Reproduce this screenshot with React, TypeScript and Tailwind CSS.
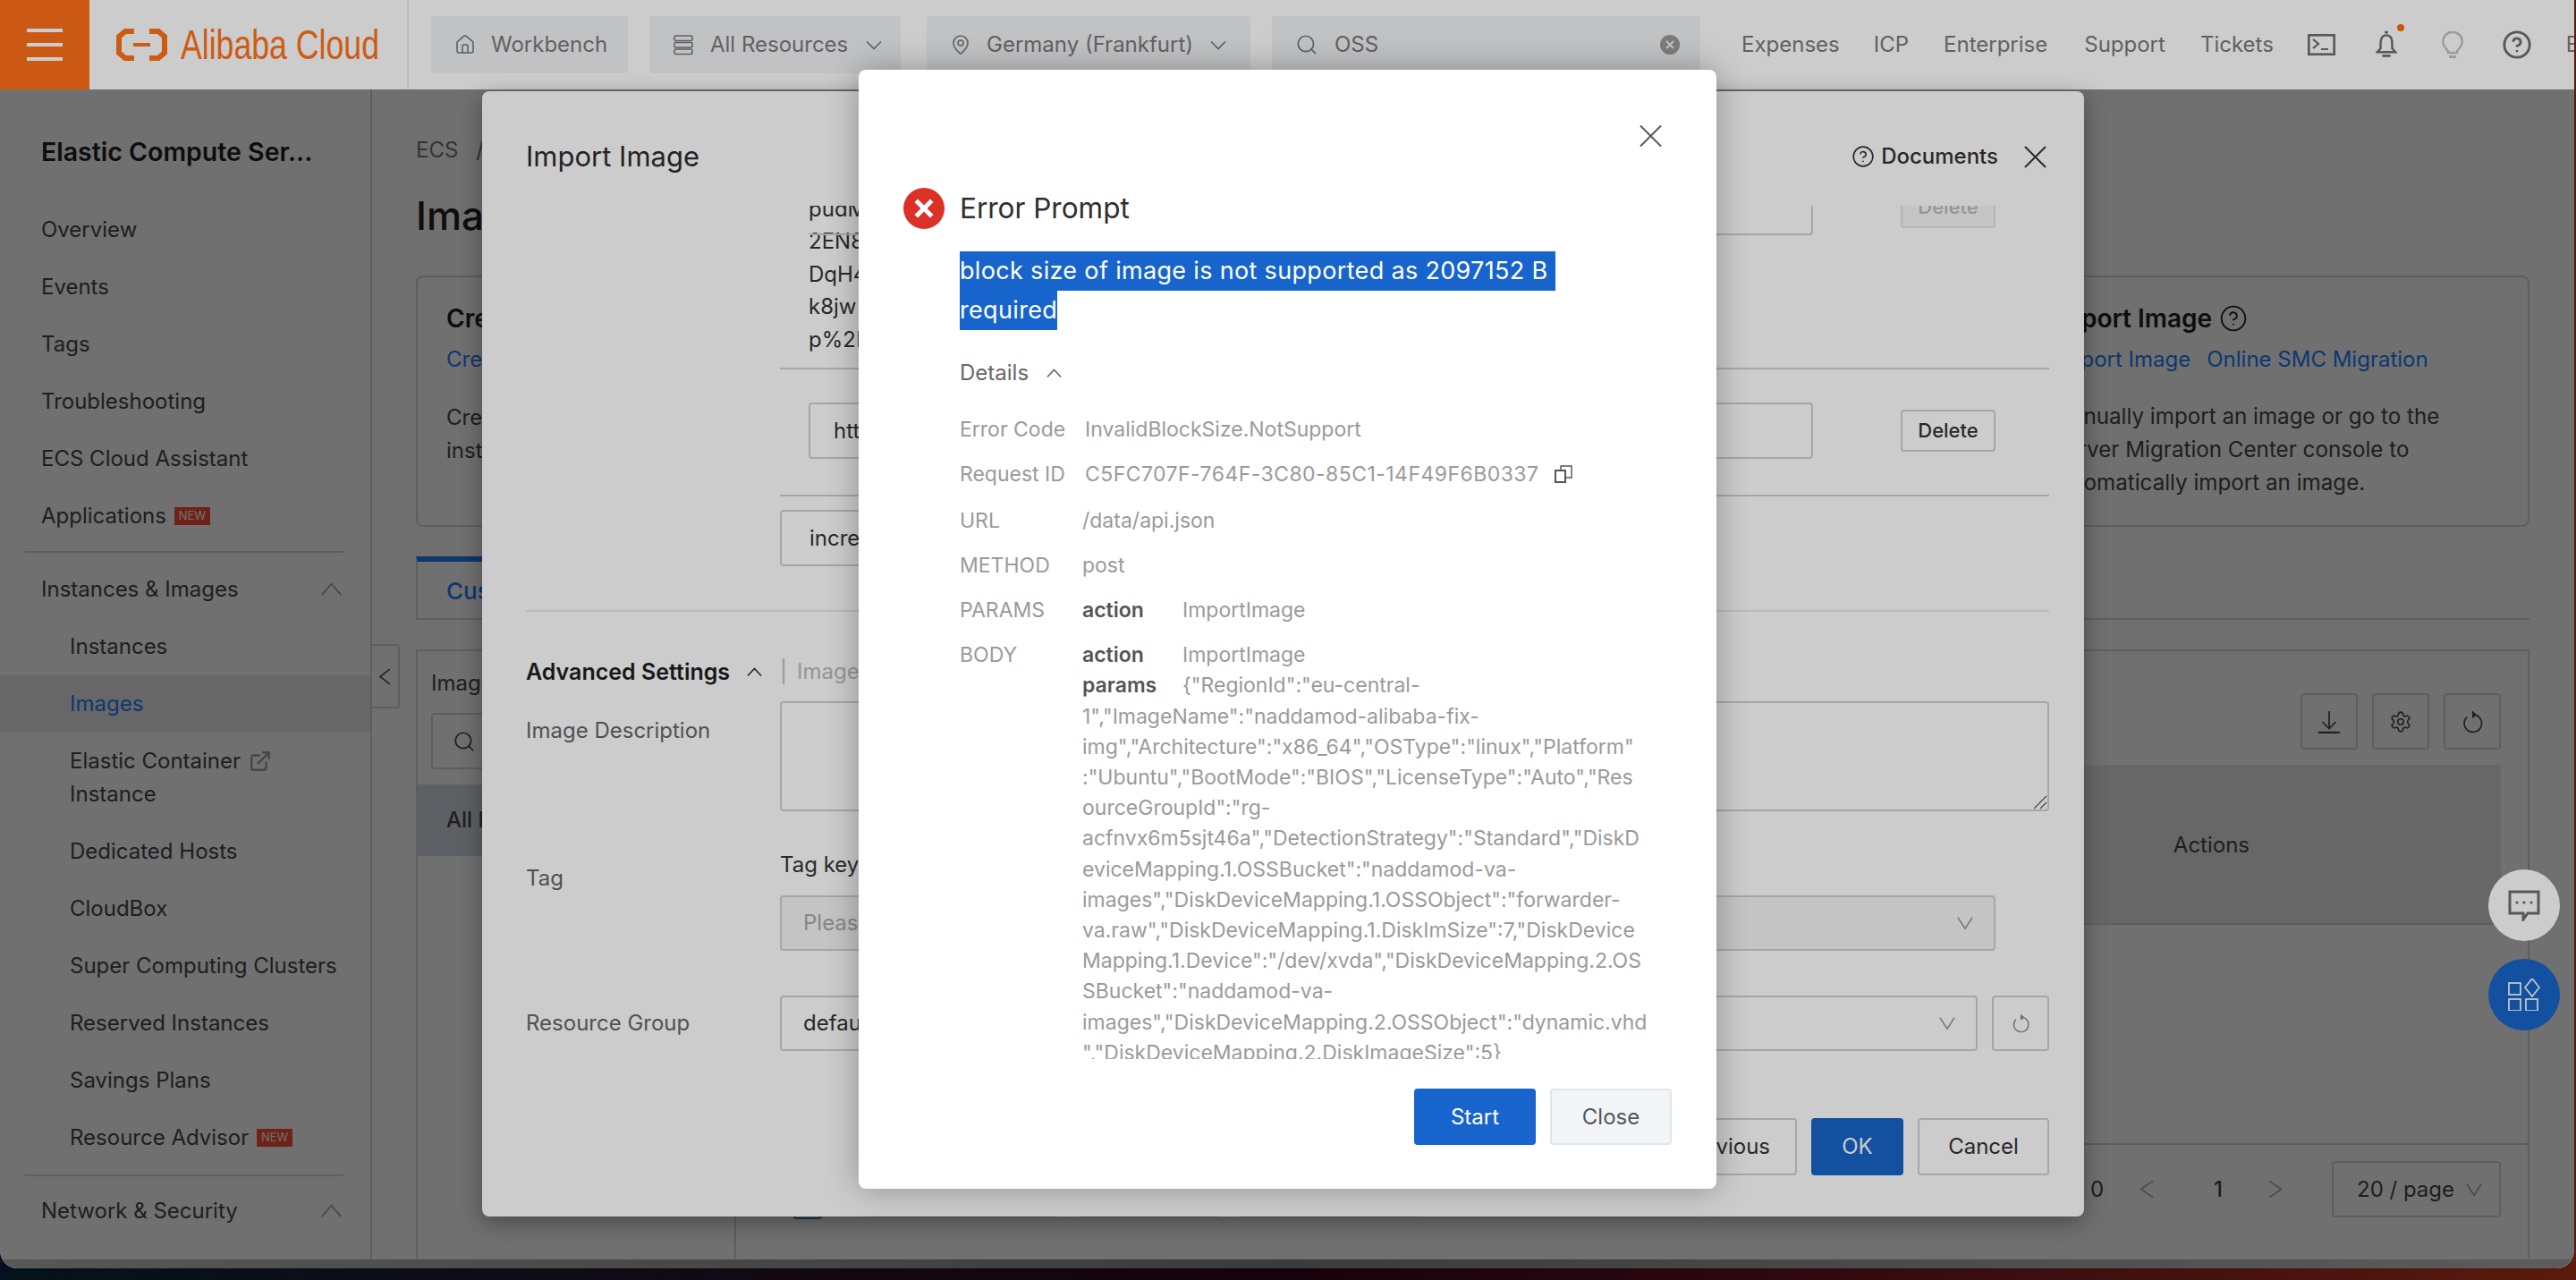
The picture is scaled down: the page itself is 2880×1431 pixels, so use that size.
import React from 'react';
import { House, MapPin, Search, CircleHelp, Settings, ExternalLink } from 'lucide-react';

const Chevron = ({ dir = 'down', className = '' }: { dir?: 'down' | 'up' | 'left' | 'right'; className?: string }) => {
  const d = {
    down: 'M2 3 L10 13 L18 3',
    up: 'M2 13 L10 3 L18 13',
    left: 'M14 1 L5 8 L14 15',
    right: 'M6 1 L15 8 L6 15',
  }[dir];
  return (
    <svg viewBox="0 0 20 16" preserveAspectRatio="none" fill="none" stroke="currentColor" strokeWidth="1.6" className={className}>
      <path d={d} vectorEffect="non-scaling-stroke" />
    </svg>
  );
};

const Cross = ({ className = '' }: { className?: string }) => (
  <svg viewBox="0 0 26 26" fill="none" stroke="currentColor" strokeWidth="2" className={className}>
    <path d="M1 1 L25 25 M25 1 L1 25" />
  </svg>
);

const Refresh = ({ className = '' }: { className?: string }) => (
  <svg viewBox="0 0 24 24" fill="none" stroke="currentColor" strokeWidth="1.5" className={className}>
    <path d="M13 4.5 A9 9 0 1 1 6.5 7" />
    <path d="M12 0.5 L16.5 4.5 L12 8.5 Z" fill="currentColor" stroke="none" />
  </svg>
);

const Logo = () => (
  <svg viewBox="0 0 57 36" className="w-[57px] h-[36px] shrink-0" fill="none" stroke="#ff7417" strokeWidth="6">
    <path d="M20 3 H10 L3 9 V27 L10 33 H20" />
    <path d="M37 3 H47 L54 9 V27 L47 33 H37" />
    <path d="M19 18 H38" strokeWidth="4" />
  </svg>
);

const TopItem = ({ children, className = '' }: { children: React.ReactNode; className?: string }) => (
  <div className={`h-[64px] bg-[#f2f3f5] rounded-[4px] flex items-center shrink-0 text-[24px] text-[#7a7a7a] ${className}`}>{children}</div>
);

const Topbar = () => (
  <div className="h-[100px] bg-white flex items-center shrink-0">
    <div className="w-[100px] h-[100px] bg-[#ff7018] flex flex-col gap-[12px] items-center justify-center shrink-0">
      <div className="w-[40px] h-[4px] bg-white" />
      <div className="w-[40px] h-[4px] bg-white" />
      <div className="w-[40px] h-[4px] bg-white" />
    </div>
    <div className="w-[357px] h-[100px] border-r-2 border-[#ededed] flex items-center pl-[30px] gap-[15px] shrink-0 overflow-hidden">
      <Logo />
      <span className="font-['Liberation_Sans'] text-[46px] text-[#ff7417] scale-x-[0.775] origin-left whitespace-nowrap">Alibaba Cloud</span>
    </div>
    <div className="flex items-center ml-[25px] shrink-0">
      <TopItem className="w-[220px] pl-[26px] gap-[17px]">
        <House size={24} strokeWidth={1.6} />
        Workbench
      </TopItem>
      <TopItem className="w-[281px] ml-[24px] pl-[26px] gap-[18px]">
        <svg viewBox="0 0 24 24" className="w-[24px] h-[24px]" fill="none" stroke="currentColor" strokeWidth="1.6">
          <rect x="2" y="2" width="20" height="5.5" rx="1.5" />
          <rect x="2" y="9.5" width="20" height="5.5" rx="1.5" />
          <rect x="2" y="17" width="20" height="5.5" rx="1.5" />
        </svg>
        All Resources
        <Chevron className="w-[20px] h-[13px] ml-[1px]" />
      </TopItem>
      <TopItem className="w-[362px] ml-[29px] pl-[26px] gap-[17px]">
        <MapPin size={24} strokeWidth={1.6} />
        Germany (Frankfurt)
        <Chevron className="w-[20px] h-[13px] ml-[1px]" />
      </TopItem>
      <TopItem className="w-[479px] ml-[24px] pl-[26px] gap-[18px]">
        <Search size={26} strokeWidth={1.6} />
        OSS
        <svg viewBox="0 0 24 24" className="w-[24px] h-[24px] ml-auto mr-[22px] text-[#9a9a9a]">
          <circle cx="12" cy="12" r="11" fill="currentColor" />
          <path d="M8 8 L16 16 M16 8 L8 16" stroke="#f2f3f5" strokeWidth="2" />
        </svg>
      </TopItem>
    </div>
    <div className="flex items-center ml-[46px] text-[24px] text-[#7a7a7a] whitespace-nowrap shrink-0">
      <span>Expenses</span>
      <span className="ml-[38px]">ICP</span>
      <span className="ml-[39px]">Enterprise</span>
      <span className="ml-[41px]">Support</span>
      <span className="ml-[39px]">Tickets</span>
    </div>
    <div className="flex items-center ml-[38px] text-[#6e6e6e] shrink-0">
      <svg viewBox="0 0 31 24" className="w-[31px] h-[24px]" fill="none" stroke="currentColor" strokeWidth="2.6">
        <rect x="1.3" y="1.3" width="28.4" height="21.4" />
        <path d="M6 6 L12 11 L6 16 M15 17 H23" strokeWidth="2.2" />
      </svg>
      <div className="relative ml-[45px] mt-[-2px]">
        <svg viewBox="0 0 26 32" className="w-[24px] h-[31px]" fill="none" stroke="currentColor" strokeWidth="2.6">
          <path d="M13 5 C7 5 6 10 6 15 V21 L2 25.5 H24 L20 21 V15 C20 10 19 5 13 5 Z" />
          <rect x="11" y="0" width="4" height="3" fill="currentColor" stroke="none" />
          <rect x="8" y="28.5" width="10" height="3" fill="currentColor" stroke="none" />
        </svg>
        <div className="absolute w-[8px] h-[8px] rounded-full bg-[#ff6a00] -top-[7px] -right-[8px]" />
      </div>
      <svg viewBox="0 0 24 30" className="w-[24px] h-[30px] ml-[50px] text-[#bcc3c9]" fill="none" stroke="currentColor" strokeWidth="2.4">
        <path d="M7 22 C3 18 1.2 15 1.2 11.5 A10.8 10.8 0 0 1 22.8 11.5 C22.8 15 21 18 17 22 V24 H7 Z" />
        <rect x="8" y="27" width="8" height="3" fill="currentColor" stroke="none" />
      </svg>
      <CircleHelp size={34} strokeWidth={2} className="ml-[43px]" />
      <span className="text-[24px] leading-[24px] text-[#7a7a7a] ml-[38px]">E</span>
    </div>
  </div>
);

const NewBadge = () => (
  <span className="inline-flex items-center justify-center w-[40px] h-[20px] bg-[#ff4f33] text-white text-[13px] ml-[9px]">NEW</span>
);

const Row = ({ children, className = '', sub = false }: { children: React.ReactNode; className?: string; sub?: boolean }) => (
  <div className={`h-[64px] flex items-center shrink-0 whitespace-nowrap ${sub ? 'pl-[78px]' : 'pl-[46px]'} ${className}`}>{children}</div>
);

const Sidebar = () => (
  <div className="w-[416px] h-full border-r-2 border-[#d8d8d8] text-[24px] text-[#474747] shrink-0 flex flex-col">
    <div className="h-[125px] pt-[54px] pl-[46px] text-[28.5px] leading-[32px] font-semibold text-[#222] whitespace-nowrap shrink-0">Elastic Compute Ser...</div>
    <Row>Overview</Row>
    <Row>Events</Row>
    <Row>Tags</Row>
    <Row>Troubleshooting</Row>
    <Row>ECS Cloud Assistant</Row>
    <Row>Applications<NewBadge /></Row>
    <div className="h-[2px] bg-[#d8d8d8] ml-[28px] w-[356px] mt-[7px] shrink-0" />
    <Row className="mt-[9px] h-[63px] justify-between pr-[30px]">
      Instances &amp; Images
      <Chevron dir="up" className="w-[27px] h-[20px] text-[#a0a0a0]" />
    </Row>
    <Row sub className="h-[61px]">Instances</Row>
    <Row sub className="bg-[#ebecef] text-[#2280ff]">Images</Row>
    <div className="h-[100px] pl-[78px] flex flex-col justify-center leading-[37px] shrink-0">
      <div className="flex items-center gap-[9px]">
        Elastic Container
        <ExternalLink size={26} strokeWidth={2.2} className="text-[#a0a0a0]" />
      </div>
      <div>Instance</div>
    </div>
    <Row sub className="h-[65px]">Dedicated Hosts</Row>
    <Row sub>CloudBox</Row>
    <Row sub>Super Computing Clusters</Row>
    <Row sub>Reserved Instances</Row>
    <Row sub>Savings Plans</Row>
    <Row sub>Resource Advisor<NewBadge /></Row>
    <div className="h-[2px] bg-[#d8d8d8] ml-[28px] w-[356px] mt-[9px] shrink-0" />
    <Row className="mt-[7px] justify-between pr-[30px]">
      Network &amp; Security
      <Chevron dir="up" className="w-[27px] h-[20px] text-[#a0a0a0]" />
    </Row>
  </div>
);

const ToolButton = ({ children }: { children: React.ReactNode }) => (
  <div className="w-[64px] h-[63px] border-2 border-[#d8d8d8] rounded-[4px] flex items-center justify-center text-[#474747]">{children}</div>
);

const Main = () => (
  <div className="flex-1 min-w-0 h-full pl-[49px] pr-[50px] pt-[53px] text-[24px] text-[#474747] relative">
    <div className="h-[30px] leading-[30px] flex gap-[20px] text-[#777]">
      <span>ECS</span>
      <span>/</span>
      <span>Images</span>
    </div>
    <div className="mt-[33px] h-[50px] leading-[50px] text-[44px] font-medium text-[#222]">Images</div>
    <div className="mt-[42px] h-[281px] border-2 border-[#d8d8d8] rounded-lg grid grid-cols-[1827px_1fr] pt-[28px]">
      <div className="pl-[32px]">
        <div className="h-[36px] leading-[36px] text-[28px] font-semibold text-[#222]">Create Custom Image</div>
        <div className="mt-[10px] h-[36px] leading-[36px] text-[#2280ff]">Create Instance</div>
        <div className="mt-[28px] leading-[37px]">Create<br />instance</div>
      </div>
      <div className="whitespace-nowrap">
        <div className="h-[36px] leading-[36px] text-[28px] font-semibold text-[#222] flex items-center gap-[8px]">
          Import Image
          <CircleHelp size={32} strokeWidth={1.4} />
        </div>
        <div className="mt-[10px] ml-[5px] h-[36px] leading-[36px] text-[#2280ff] flex gap-[18px]">
          <span>Import Image</span>
          <span>Online SMC Migration</span>
        </div>
        <div className="mt-[27px] leading-[37px] text-[24.2px]">
          Manually import an image or go to the<br />
          Server Migration Center console to<br />
          automatically import an image.
        </div>
      </div>
    </div>
    <div className="mt-[33px] h-[71px] border-b-2 border-[#d8d8d8]">
      <div className="w-[320px] h-[70px] border-t-[6px] border-l-2 border-[#d8d8d8] border-t-[#2280ff] flex items-center pl-[32px] text-[26px] text-[#2280ff] font-medium">Custom Images</div>
    </div>
    <div className="mt-[33px] h-[681px] border-2 border-b-0 border-[#d8d8d8] flex">
      <div className="w-[356px] border-r-2 border-[#d8d8d8] shrink-0">
        <div className="pl-[15px] pt-[18px] h-[69px] leading-[36px]">Image Types</div>
        <div className="ml-[15px] w-[310px] h-[63px] border-2 border-[#d8d8d8] rounded-[4px] flex items-center pl-[22px]">
          <Search size={26} strokeWidth={1.6} />
        </div>
        <div className="mt-[17px] h-[80px] bg-[#d6dce3] flex items-center pl-[32px] font-medium">All Images</div>
      </div>
      <div className="flex-1 min-w-0 flex flex-col">
        <div className="flex justify-end gap-[16px] pr-[30px] pt-[47px]">
          <ToolButton>
            <svg viewBox="0 0 24 24" className="w-[26px] h-[26px]" fill="none" stroke="currentColor" strokeWidth="1.5">
              <path d="M12 1 V19 M5 12 L12 19 L19 12" />
              <path d="M1 23 H23" strokeWidth="2" />
            </svg>
          </ToolButton>
          <ToolButton><Settings size={26} strokeWidth={1.5} /></ToolButton>
          <ToolButton><Refresh className="w-[26px] h-[26px]" /></ToolButton>
        </div>
        <div className="ml-[16px] mr-[30px] mt-[17px] h-[177px] bg-[#ebecef] flex items-center justify-end pr-[281px] shrink-0 pt-[2px]">Actions</div>
        <div className="h-[2px] bg-[#d8d8d8] ml-[16px] mr-[30px] shrink-0" />
        <div className="h-[246px] border-b-2 border-[#d8d8d8] shrink-0" />
        <div className="h-[97px] flex items-center pl-[64px] pt-[2px]">
          <div className="w-[32px] h-[32px] border-2 border-[#4a6fa8] rounded-[4px] shrink-0 mt-[34px]" />
          <div className="flex gap-[18px] ml-[48px]">
            <div className="w-[218px] h-[63px] border-2 border-[#d8d8d8] rounded-[4px]" />
            <div className="w-[162px] h-[63px] border-2 border-[#d8d8d8] rounded-[4px]" />
            <div className="w-[207px] h-[63px] border-2 border-[#d8d8d8] rounded-[4px]" />
          </div>
          <div className="ml-auto flex items-center pr-[30px]">
            <span className="mr-[34px] whitespace-nowrap">Total: 0</span>
            <Chevron dir="left" className="w-[30px] h-[21px] text-[#a8a8a8]" />
            <span className="ml-[59px] font-medium">1</span>
            <Chevron dir="right" className="w-[30px] h-[21px] text-[#a8a8a8] ml-[43px] mr-[49px]" />
            <div className="w-[189px] h-[63px] border-2 border-[#d8d8d8] rounded-[4px] flex items-center pl-[26px] gap-[12px] whitespace-nowrap">
              20 / page
              <Chevron className="w-[20px] h-[20px] text-[#a8a8a8]" />
            </div>
          </div>
        </div>
      </div>
    </div>
  </div>
);

const PanelButton = ({ children, className = '' }: { children: React.ReactNode; className?: string }) => (
  <div className={`h-[64px] border-2 border-[#d0d0d0] rounded-[4px] flex items-center justify-center text-[#333] ${className}`}>{children}</div>
);

const Panel = () => (
  <div className="absolute left-[539px] top-[102px] w-[1791px] h-[1258px] bg-white rounded-lg shadow-[0_6px_24px_rgba(0,0,0,0.35)] pl-[49px] pr-[39px] text-[24px] text-[#333] flex flex-col">
    <div className="h-[128px] pt-[55px] flex justify-between shrink-0">
      <div className="h-[36px] leading-[36px] text-[31px] text-[#2c2c2c]">Import Image</div>
      <div className="flex items-center h-[36px] mr-[3px]">
        <CircleHelp size={26} strokeWidth={1.5} />
        <span className="ml-[7px] font-medium">Documents</span>
        <Cross className="w-[25px] h-[25px] ml-[29px]" />
      </div>
    </div>
    <div className="h-[1020px] overflow-hidden shrink-0">
      <div className="-mt-[22px]">
        <div className="ml-[284px]">
          <div className="h-[203px] grid grid-cols-[1123px_1fr] pl-[32px] overflow-hidden">
            <div className="row-start-1 col-start-1 pt-[8px] leading-[36.4px] text-[#333]">
              pudM<br />2EN8<br />DqH4<br />k8jw<br />p%2I
            </div>
            <div className="row-start-1 col-start-1 h-[55px] border-2 border-[#d0d0d0] rounded-[4px] border-l-0" />
            <div className="row-start-1 col-start-2 ml-[98px] w-[106px] h-[47px] border-2 border-[#e0e0e0] bg-[#f7f7f7] rounded-[4px] flex items-center justify-center text-[#bbb] text-[22px] font-medium">Delete</div>
          </div>
          <div className="h-[2px] bg-[#d0d0d0]" />
          <div className="mt-[37px] flex items-center pl-[32px]">
            <div className="w-[1123px] h-[63px] border-2 border-[#d0d0d0] rounded-[4px] flex items-center pl-[26px] shrink-0">https://naddamod-va-images</div>
            <div className="ml-[98px] w-[106px] h-[47px] border-2 border-[#d0d0d0] rounded-[4px] flex items-center justify-center text-[22px] font-medium">Delete</div>
          </div>
          <div className="mt-[40px] h-[2px] bg-[#d0d0d0]" />
          <div className="mt-[15px] w-[700px] h-[63px] border-2 border-[#d0d0d0] rounded-[4px] flex items-center pl-[31px]">increment</div>
        </div>
        <div className="mt-[49px] h-[2px] bg-[#e8e8e8]" />
        <div className="mt-[49px] h-[36px] leading-[36px] flex items-center whitespace-nowrap">
          <span className="font-semibold text-[25px] text-[#1f1f1f]">Advanced Settings</span>
          <Chevron dir="up" className="w-[19px] h-[13px] ml-[18px]" />
          <span className="ml-[19px] text-[#bbb]">|</span>
          <span className="ml-[11px] text-[#bbb]">Image</span>
        </div>
        <div className="mt-[15px] flex">
          <div className="w-[284px] pt-[15px] leading-[36px] text-[#666] shrink-0">Image Description</div>
          <div className="flex-1 h-[123px] border-2 border-[#d0d0d0] rounded-[4px] flex items-end justify-end">
            <svg viewBox="0 0 16 16" className="w-[16px] h-[16px] text-[#555]" fill="none" stroke="currentColor" strokeWidth="1.2">
              <path d="M1 15 L15 1 M8 15 L15 8" />
            </svg>
          </div>
        </div>
        <div className="mt-[42px] flex">
          <div className="w-[284px] pt-[15px] leading-[36px] text-[#666] shrink-0">Tag</div>
          <div>
            <div className="leading-[36px] text-[#333]">Tag key</div>
            <div className="mt-[16px] w-[1359px] h-[62px] border-2 border-[#d0d0d0] bg-[#f6f6f6] rounded-[4px] flex items-center justify-between pl-[24px] pr-[22px] text-[#a8a8a8]">
              Please select
              <Chevron className="w-[20px] h-[20px] text-[#999]" />
            </div>
          </div>
        </div>
        <div className="mt-[50px] flex items-center">
          <div className="w-[284px] leading-[36px] text-[#666] shrink-0">Resource Group</div>
          <div className="w-[1339px] h-[62px] border-2 border-[#d0d0d0] rounded-[4px] flex items-center justify-between pl-[24px] pr-[22px]">
            default
            <Chevron className="w-[20px] h-[20px] text-[#999]" />
          </div>
          <div className="ml-[16px] w-[64px] h-[62px] border-2 border-[#d0d0d0] rounded-[4px] flex items-center justify-center text-[#888]">
            <Refresh className="w-[22px] h-[22px]" />
          </div>
        </div>
      </div>
    </div>
    <div className="flex justify-end gap-[16px] shrink-0">
      <PanelButton className="w-[158px]">Previous</PanelButton>
      <div className="w-[103px] h-[64px] bg-[#1964c8] rounded-[4px] flex items-center justify-center text-white">OK</div>
      <PanelButton className="w-[147px]">Cancel</PanelButton>
    </div>
  </div>
);

const detailLines = [
  '1","ImageName":"naddamod-alibaba-fix-',
  'img","Architecture":"x86_64","OSType":"linux","Platform"',
  ':"Ubuntu","BootMode":"BIOS","LicenseType":"Auto","Res',
  'ourceGroupId":"rg-',
  'acfnvx6m5sjt46a","DetectionStrategy":"Standard","DiskD',
  'eviceMapping.1.OSSBucket":"naddamod-va-',
  'images","DiskDeviceMapping.1.OSSObject":"forwarder-',
  'va.raw","DiskDeviceMapping.1.DiskImSize":7,"DiskDevice',
  'Mapping.1.Device":"/dev/xvda","DiskDeviceMapping.2.OS',
  'SBucket":"naddamod-va-',
  'images","DiskDeviceMapping.2.OSSObject":"dynamic.vhd',
  '","DiskDeviceMapping.2.DiskImageSize":5}',
];

const DetailRow = ({ label, children, shift = false }: { label: string; children: React.ReactNode; shift?: boolean }) => (
  <div className="flex h-[50px] items-center whitespace-nowrap">
    <span className={`shrink-0 ${shift ? 'w-[137px]' : 'w-[140px]'}`}>{label}</span>
    {children}
  </div>
);

const ErrorDialog = () => (
  <div className="absolute left-[960px] top-[78px] w-[959px] h-[1251px] bg-white rounded-lg shadow-[0_0_36px_rgba(0,0,0,0.3)] flex flex-col text-[23px] text-[#9a9a9a]">
    <div className="flex justify-end pt-[61px] pr-[61px] shrink-0">
      <Cross className="w-[25px] h-[26px] text-[#555]" />
    </div>
    <div className="mt-[44px] pl-[50px] flex items-center gap-[17px] shrink-0">
      <svg viewBox="0 0 46 46" className="w-[46px] h-[46px] shrink-0">
        <circle cx="23" cy="23" r="23" fill="#dc3127" />
        <path d="M16 16 L30 30 M30 16 L16 30" stroke="#fff" strokeWidth="5" strokeLinecap="square" />
      </svg>
      <span className="text-[31.5px] text-[#2e2e2e]">Error Prompt</span>
    </div>
    <div className="mt-[25px] ml-[113px] text-[27px] tracking-[0.33px] text-white leading-[44px] shrink-0">
      <span className="block w-fit bg-[#1764cc] pr-[8px] whitespace-nowrap">block size of image is not supported as 2097152 B</span>
      <span className="block w-fit bg-[#1764cc]">required</span>
    </div>
    <div className="mt-[33px] ml-[113px] h-[30px] flex items-center gap-[19px] text-[24px] text-[#666] shrink-0">
      Details
      <Chevron dir="up" className="w-[19px] h-[13px]" />
    </div>
    <div className="mt-[23px] ml-[113px] mr-[70px] h-[729px] overflow-hidden shrink-0">
      <DetailRow label="Error Code">InvalidBlockSize.NotSupport</DetailRow>
      <DetailRow label="Request ID">
        <span className="tracking-[0.45px]">C5FC707F-764F-3C80-85C1-14F49F6B0337</span>
        <svg viewBox="0 0 20 20" className="w-[20px] h-[20px] ml-[18px] text-[#555]" fill="none" stroke="currentColor">
          <rect x="1" y="6" width="11" height="13" strokeWidth="2" />
          <path d="M7 6 V1 H19 V14 H12" strokeWidth="1.4" />
        </svg>
      </DetailRow>
      <div className="h-[2px]" />
      <DetailRow label="URL" shift>/data/api.json</DetailRow>
      <DetailRow label="METHOD" shift>post</DetailRow>
      <DetailRow label="PARAMS" shift>
        <span className="w-[112px] font-semibold text-[#555]">action</span>
        ImportImage
      </DetailRow>
      <div className="flex pt-[8px]">
        <span className="w-[137px] shrink-0 leading-[34px]">BODY</span>
        <div className="leading-[34.2px] whitespace-nowrap">
          <div className="flex">
            <span className="w-[112px] font-semibold text-[#555]">action</span>
            ImportImage
          </div>
          <div className="flex">
            <span className="w-[112px] font-semibold text-[#555]">params</span>
            {'{"RegionId":"eu-central-'}
          </div>
          {detailLines.map(line => <div key={line}>{line}</div>)}
        </div>
      </div>
    </div>
    <div className="mt-[33px] pr-[50px] flex justify-end gap-[16px] text-[24px] shrink-0">
      <div className="w-[136px] h-[63px] bg-[#1764cc] rounded-[4px] text-white flex items-center justify-center">Start</div>
      <div className="w-[136px] h-[63px] bg-[#f2f5f7] border-2 border-[#e3e6e8] rounded-[4px] text-[#555] flex items-center justify-center">Close</div>
    </div>
  </div>
);

export default function App() {
  return (
    <div className="w-[2880px] h-[1431px] relative overflow-hidden bg-gradient-to-r from-[#03121c] via-[#16020c] to-[#5a1a0c] font-['Inter',sans-serif]">
      <div className="w-[2878px] h-[1418px] relative overflow-hidden rounded-b-[20px] flex flex-col bg-white">
        <Topbar />
        <div className="h-[1308px] flex overflow-hidden shrink-0">
          <Sidebar />
          <Main />
        </div>
        <div className="h-[10px] bg-gradient-to-r from-[#c8c8c8] via-[#888] to-[#d4d4d4] shrink-0" />

        {/* collapse handle on the sidebar edge */}
        <div className="absolute left-[414px] top-[720px] w-[33px] h-[72px] border-2 border-[#d8d8d8] rounded-r-[4px] bg-white flex items-center justify-center text-[#555]">
          <Chevron dir="left" className="w-[24px] h-[19px]" />
        </div>

        {/* first mask, under the drawer */}
        <div className="absolute left-0 right-0 top-[100px] bottom-0 bg-black/45" />
        <Panel />
        <div className="absolute left-[2782px] top-[972px] w-[80px] h-[80px] rounded-full bg-white flex items-center justify-center text-[#6e6e6e]">
          <svg viewBox="0 0 36 36" className="w-[36px] h-[36px]" fill="none" stroke="currentColor" strokeWidth="3">
            <path d="M2 3 H34 V27 H22 L17 34 V27 H2 Z" />
            <circle cx="10" cy="15" r="1.6" fill="currentColor" stroke="none" />
            <circle cx="18" cy="15" r="1.6" fill="currentColor" stroke="none" />
            <circle cx="26" cy="15" r="1.6" fill="currentColor" stroke="none" />
          </svg>
        </div>
        <div className="absolute left-[2782px] top-[1072px] w-[80px] h-[80px] rounded-full bg-[#1964c8] flex items-center justify-center text-white">
          <svg viewBox="0 0 36 36" className="w-[36px] h-[36px]" fill="none" stroke="currentColor" strokeWidth="1.7">
            <rect x="1" y="5" width="13" height="13" />
            <path d="M27 0 L35 10 L27 20 L19 10 Z" />
            <rect x="1" y="23" width="13" height="13" />
            <rect x="20" y="23" width="13" height="13" />
          </svg>
        </div>

        {/* second mask, under the error dialog */}
        <div className="absolute inset-0 bg-black/20" />
        <ErrorDialog />
      </div>
    </div>
  );
}
